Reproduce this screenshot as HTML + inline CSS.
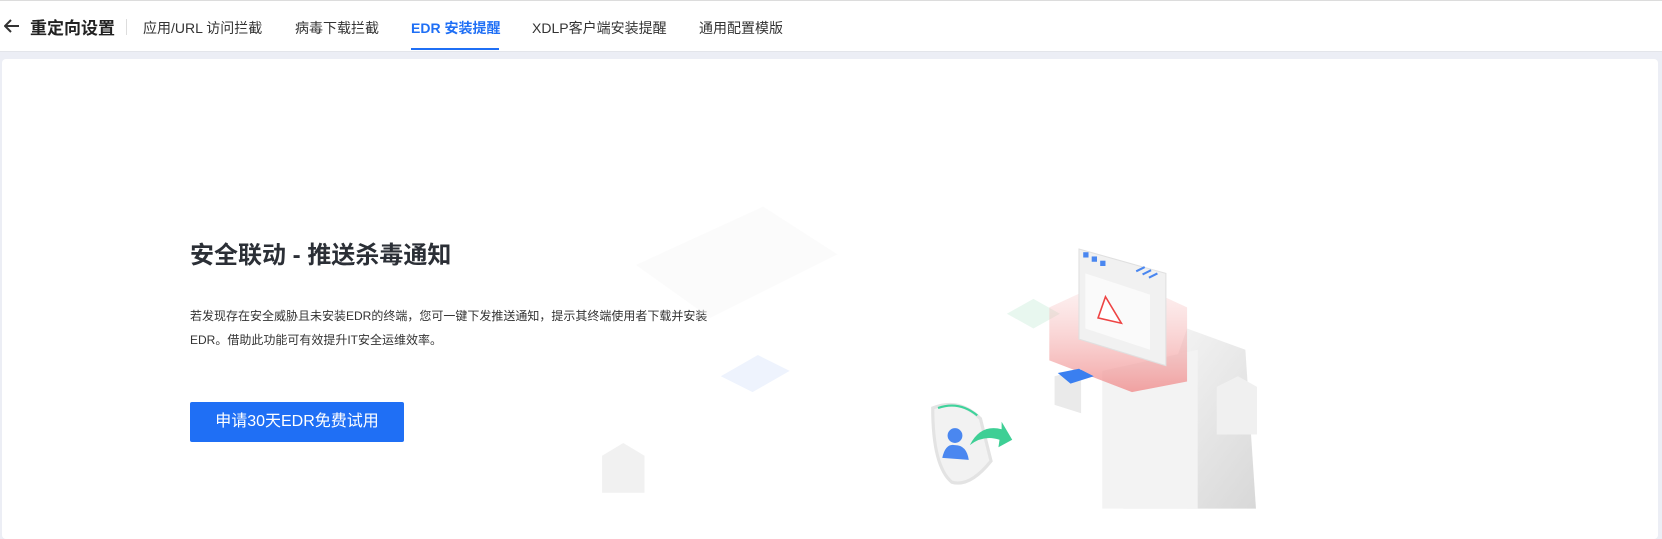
<!DOCTYPE html>
<html><head><meta charset="utf-8"><style>
*{margin:0;padding:0;box-sizing:border-box}
body{width:1662px;height:532px;overflow:hidden;background:#eceef5;font-family:"Liberation Sans","Noto Sans CJK SC",sans-serif;position:relative}
.hdr{position:absolute;left:0;top:0;width:1662px;height:52px;background:#fff;border-top:1px solid #dcdcdc;border-bottom:1px solid #e3e5ea}
.hdr span{position:absolute;top:17px;font-size:14px;color:#333;white-space:nowrap}
.card{position:absolute;left:2px;top:59px;width:1656px;height:480px;background:#fff;border-radius:4px}
.t{position:absolute;left:190px;top:235px;font-size:24px;font-weight:bold;color:#2b2f36}
.d{position:absolute;left:190px;top:305px;font-size:12px;color:#333;line-height:23.5px;width:525px}
.b{position:absolute;left:190px;top:402px;width:214px;height:40px;background:#1f6ff5;border-radius:2px;color:#fff;font-size:16px;text-align:center;line-height:40px}
</style></head><body>
<div class="hdr">
<svg style="position:absolute;left:4px;top:18px" width="16" height="14" viewBox="0 0 16 14"><path d="M15 7H2M7 1L1 7l6 6" fill="none" stroke="#333" stroke-width="2"/></svg>
<span style="left:30px;top:13px;font-size:17px;color:#222;font-weight:bold">重定向设置</span>
<div style="position:absolute;left:126px;top:18px;width:1px;height:16px;background:#ddd"></div>
<span style="left:143px">应用/URL 访问拦截</span>
<span style="left:295px">病毒下载拦截</span>
<span style="left:411px;color:#1f6ff5;font-weight:bold">EDR 安装提醒</span>
<div style="position:absolute;left:411px;top:47px;width:88px;height:2px;background:#1f6ff5"></div>
<span style="left:532px">XDLP客户端安装提醒</span>
<span style="left:699px">通用配置模版</span>
</div>
<div class="card"></div>
<div class="t">安全联动 - 推送杀毒通知</div>
<div class="d">若发现存在安全威胁且未安装EDR的终端，您可一键下发推送通知，提示其终端使用者下载并安装EDR。借助此功能可有效提升IT安全运维效率。</div>
<div class="b">申请30天EDR免费试用</div>
<svg style="position:absolute;left:0;top:0" width="1662" height="532" viewBox="0 0 1568 502">
<defs>
<linearGradient id="r" x1="0" y1="0" x2="0" y2="1"><stop offset="0" stop-color="#f7c8c8" stop-opacity="0.2"/><stop offset="1" stop-color="#f08c8c"/></linearGradient>
<linearGradient id="g" x1="0" y1="0" x2="1" y2="1"><stop offset="0" stop-color="#fafafa"/><stop offset="1" stop-color="#d8d8d8"/></linearGradient>
</defs>
<path d="M600 250 L720 195 L790 240 L670 300Z" fill="#f8f8f8" opacity="0.5"/>
<path d="M680 355 L715 335 L745 350 L710 370Z" fill="#eef3fd"/>
<path d="M950 296 L975 282 L1000 296 L975 310Z" fill="#e8f7ef"/>
<path d="M1120 310 L1175 330 L1185 480 L1060 480 Z" fill="url(#g)"/>
<path d="M1040 350 L1130 330 L1130 480 L1040 480Z" fill="#f3f3f3"/>
<path d="M990 290 L1055 260 L1120 290 L1120 360 L1068 370 L990 340Z" fill="url(#r)" opacity="0.8"/>
<path d="M1018 235 L1100 258 L1100 345 L1018 320Z" fill="#f1f1f1" stroke="#e0e0e0"/>
<path d="M1024 258 L1085 278 L1085 330 L1024 310Z" fill="#fafafa"/>
<path d="M1043 280 L1058 305 L1036 300Z" fill="#fff" stroke="#e44" stroke-width="1.5"/>
<rect x="1022" y="238" width="5" height="5" fill="#4a87f0"/><rect x="1030" y="242" width="5" height="5" fill="#4a87f0"/><rect x="1038" y="246" width="5" height="5" fill="#4a87f0"/>
<path d="M1072 256l8-4M1078 259l8-4M1084 262l8-4" stroke="#4a87f0" stroke-width="2"/>
<path d="M995 355 L1020 348 L1020 390 L995 382Z" fill="#eaeaea"/>
<path d="M998 352 L1018 348 L1032 355 L1010 362Z" fill="#3a7ff0"/>
<path d="M1148 365 L1168 355 L1186 365 L1186 410 L1148 410Z" fill="#f0f0f0"/>
<path d="M568 430 L588 418 L608 430 L608 465 L568 465Z" fill="#f1f1f1"/>
<path d="M880 385 Q905 375 925 395 L935 435 Q915 460 898 455 Q880 440 880 385Z" fill="#f2f2f2" stroke="#e3e3e3" stroke-width="3"/>
<path d="M885 385 Q905 378 922 392" stroke="#3ed39b" stroke-width="2" fill="none"/>
<circle cx="901" cy="411" r="7" fill="#4a87f0"/><path d="M889 432 Q892 418 901 420 Q912 420 914 434Z" fill="#4a87f0"/>
<path d="M915 420 Q925 400 945 405 L945 398 L955 415 L942 422 L943 415 Q928 410 915 420Z" fill="#3ecf95"/>
</svg>
</body></html>
